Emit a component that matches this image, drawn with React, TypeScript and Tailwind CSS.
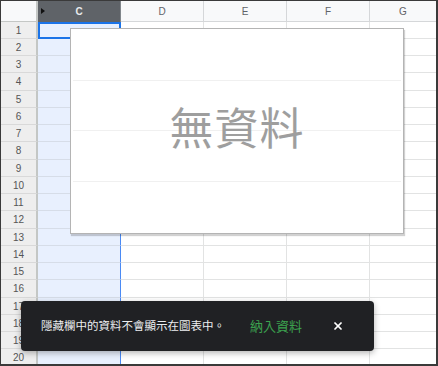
import { X } from 'lucide-react'

const columns = ['D', 'E', 'F']
const rows = Array.from({ length: 20 }, (_, i) => i + 1)

export default function App() {
  return (
    <div lang="zh-TW" className="relative w-[438px] h-[366px] overflow-hidden bg-white border-t border-l border-r-2 border-b-2 border-[#3a3a3a] font-['Liberation_Sans',Arial,sans-serif]">
      {/* column headers */}
      <div className="flex h-[21px]">
        <div className="w-[37px] shrink-0 bg-[#f8f9fa] border-r-[2px] border-b border-[#c4c7c5]" />
        <div className="w-[83px] shrink-0 relative flex items-center justify-center bg-[#5f6368] border-r border-[#80868b] text-[10px] font-bold text-[#e8eaed]">
          <span className="absolute left-[3px] top-[7px] w-0 h-0 border-y-[3px] border-y-transparent border-l-[4px] border-l-[#111]" />
          C
        </div>
        {columns.map(c => (
          <div key={c} className="w-[83px] shrink-0 flex items-center justify-center bg-[#f8f9fa] border-r border-b border-[#d5d7d9] text-[10px] text-[#5f6368]">
            {c}
          </div>
        ))}
        <div className="flex-1 flex items-center justify-center bg-[#f8f9fa] border-b border-[#d5d7d9] text-[10px] text-[#5f6368]">
          G
        </div>
      </div>

      {/* rows */}
      {rows.map(n => (
        <div key={n} className={`flex ${n % 4 === 0 ? 'h-[18px]' : 'h-[17px]'}`}>
          <div className="w-[37px] shrink-0 flex items-center justify-center bg-[#eeeeee] border-r-[2px] border-b border-r-[#c4c7c5] border-b-[#d9d9d9] text-[10px] text-[#555]">
            {n}
          </div>
          <div className={`w-[83px] shrink-0 bg-[#e8f0fe] border-b border-r border-b-[#d6dde8] border-r-[#4a8af4] ${n === 1 ? 'outline-2 outline-[#1a73e8] -outline-offset-2' : ''}`} />
          {columns.map(c => (
            <div key={c} className="w-[83px] shrink-0 border-r border-b border-[#e2e3e3]" />
          ))}
          <div className="flex-1 border-b border-[#e2e3e3]" />
        </div>
      ))}

      {/* chart */}
      <div className="absolute left-[69px] top-[27px] w-[334px] h-[206px] bg-white border border-[#b4b4b4] shadow-[1px_2px_1px_rgba(0,0,0,0.18)] flex items-center justify-center pb-[10px]">
        <div className="absolute left-[2px] right-[2px] top-[51px] h-px bg-[#f0f0f0]" />
        <div className="absolute left-[2px] right-[2px] top-[101px] h-px bg-[#f0f0f0]" />
        <div className="absolute left-[2px] right-[2px] top-[152px] h-px bg-[#f0f0f0]" />
        <span className="relative text-[44px] leading-none text-[#9e9e9e] font-['Noto_Sans_CJK_TC',sans-serif] tracking-[1px]">
          無資料
        </span>
      </div>

      {/* snackbar */}
      <div className="absolute left-[20px] top-[300px] w-[353px] h-[50px] rounded-[4px] bg-[#202124] shadow-[0_2px_6px_rgba(0,0,0,0.3)] flex items-center pl-[20px] pr-[30px] font-['Noto_Sans_CJK_TC',sans-serif] [font-feature-settings:'locl']">
        <span className="text-[11.5px] text-[#eceef0]">隱藏欄中的資料不會顯示在圖表中。</span>
        <span className="ml-auto text-[13px] text-[#3ca24f]">納入資料</span>
        <X size={12} strokeWidth={3.5} className="ml-[30px] text-white" />
      </div>
    </div>
  )
}
